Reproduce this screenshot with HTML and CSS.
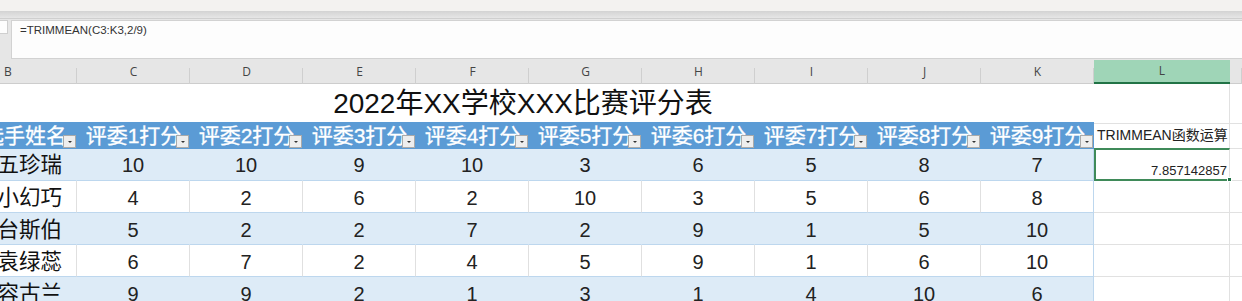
FILE: index.html
```html
<!DOCTYPE html>
<html lang="zh-CN">
<head>
  <meta charset="UTF-8" />
  <meta name="viewport" content="width=device-width, initial-scale=1.0" />
  <title>TRIMMEAN</title>
  <link rel="stylesheet" href="styles.css">
</head>
<body>
  <div class="ribbon"></div>
  <div class="ribbon-edge"></div>

  <div class="formula-row">
    <div class="namebox"></div>
    <div class="fx">=TRIMMEAN(C3:K3,2/9)</div>
  </div>

  <div class="sheet">
    <div class="row colhead">
      <div class="ch left">B</div>
      <div class="ch">C</div>
      <div class="ch">D</div>
      <div class="ch">E</div>
      <div class="ch">F</div>
      <div class="ch">G</div>
      <div class="ch">H</div>
      <div class="ch">I</div>
      <div class="ch">J</div>
      <div class="ch">K</div>
      <div class="ch active">L</div>
      <div class="ch"></div>
    </div>

    <div class="row title-row">
      <div class="title">2022年XX学校XXX比赛评分表</div>
      <div class="cell side"></div>
      <div class="cell"></div>
    </div>

    <div class="row head-row">
      <div class="th name">选手姓名<span class="drop"></span></div>
      <div class="th">评委1打分<span class="drop"></span></div>
      <div class="th">评委2打分<span class="drop"></span></div>
      <div class="th">评委3打分<span class="drop"></span></div>
      <div class="th">评委4打分<span class="drop"></span></div>
      <div class="th">评委5打分<span class="drop"></span></div>
      <div class="th">评委6打分<span class="drop"></span></div>
      <div class="th">评委7打分<span class="drop"></span></div>
      <div class="th">评委8打分<span class="drop"></span></div>
      <div class="th">评委9打分<span class="drop"></span></div>
      <div class="cell side label">TRIMMEAN函数运算</div>
      <div class="cell"></div>
    </div>

    <div class="row data band" id="r1"></div>
    <div class="row data" id="r2"></div>
    <div class="row data band" id="r3"></div>
    <div class="row data" id="r4"></div>
    <div class="row data band" id="r5"></div>
  </div>

  <script>
    // score table
    const rows = [
      ['五珍瑞', 10, 10, 9, 10, 3, 6, 5, 8, 7],
      ['小幻巧', 4, 2, 6, 2, 10, 3, 5, 6, 8],
      ['台斯伯', 5, 2, 2, 7, 2, 9, 1, 5, 10],
      ['袁绿蕊', 6, 7, 2, 4, 5, 9, 1, 6, 10],
      ['容古兰', 9, 9, 2, 1, 3, 1, 4, 10, 6]
    ];

    rows.forEach((r, i) => {
      const row = document.getElementById('r' + (i + 1));
      let html = '<div class="td name">' + r[0] + '</div>';
      for (let j = 1; j < r.length; j++) {
        html += '<div class="td' + (j === 9 ? ' last' : '') + '">' + r[j] + '</div>';
      }
      if (i === 0) {
        html += '<div class="cell side result">7.857142857<span class="handle"></span></div>';
      } else {
        html += '<div class="cell side"></div>';
      }
      html += '<div class="cell"></div>';
      row.innerHTML = html;
    });
  </script>
</body>
</html>
```

FILE: styles.css
```css
* {
  box-sizing: border-box;
}
body {
  margin: 0;
  width: 1242px;
  height: 301px;
  overflow: hidden;
  background: #fff;
  font-family: 'Liberation Sans', 'Noto Sans CJK SC', sans-serif;
  color: #222;
}
.ribbon {
  height: 11px;
  background: #f3f2f0;
}
.ribbon-edge {
  height: 8px;
  background: linear-gradient(to bottom, #d3d3d3, #e6e6e6);
  border-bottom: 1px solid #cfcfcf;
}
.formula-row {
  display: flex;
  height: 41px;
  background: #e6e6e6;
  padding-bottom: 1px;
}
.namebox {
  width: 8px;
  height: 14px;
  margin-top: 1px;
  background: #fdfdfd;
  border: 1px solid #cfcfcf;
  border-left: none;
}
.fx {
  flex: 1;
  margin-left: 3px;
  margin-top: 1px;
  background: #fdfdfd;
  border: 1px solid #d2d2d2;
  border-right: none;
  padding: 3px 0 0 8px;
  font-size: 11.5px;
  color: #333;
}

/* grid */
.row {
  display: grid;
  grid-template-columns: 77px repeat(9, 113px) 136px 1fr;
}
.colhead {
  height: 24px;
  background: #e6e6e6;
  border-bottom: 1px solid #cdcdcd;
}
.ch {
  position: relative;
  text-align: center;
  font-family: 'Open Sans', sans-serif;
  font-size: 12px;
  line-height: 24px;
  color: #444;
}
.ch::after {
  content: '';
  position: absolute;
  right: 0;
  top: 8px;
  bottom: 0;
  width: 1px;
  background: #cfcfcf;
}
.ch.left {
  text-align: left;
  padding-left: 4px;
}
.ch.active {
  background: #9fd5b7;
  border-bottom: 2px solid #217346;
  line-height: 22px;
}
.ch.active::after {
  display: none;
}

.title-row {
  height: 38px;
}
.title {
  grid-column: 1 / 11;
  text-align: center;
  padding-right: 48px;
  font-size: 28px;
  line-height: 40px;
  color: #111;
  white-space: nowrap;
}
.cell {
  border-bottom: 1px solid #e1e1e1;
}
.cell.side {
  border-right: 1px solid #e1e1e1;
}

.head-row {
  height: 26px;
}
.th {
  position: relative;
  background: #5b9bd5;
  color: #fff;
  font-size: 21px;
  line-height: 27px;
  text-align: center;
  white-space: nowrap;
  overflow: hidden;
  -webkit-text-stroke: 0.3px #fff;
}
.th.name {
  direction: rtl;
  text-align: right;
  padding-right: 10px;
}
.drop {
  position: absolute;
  right: 1px;
  bottom: 1px;
  width: 13px;
  height: 13px;
  background: #eeeeee;
  border: 1px solid #aaa;
}
.drop::after {
  content: '';
  position: absolute;
  left: 4px;
  top: 5px;
  border-left: 2px solid transparent;
  border-right: 2px solid transparent;
  border-top: 2px solid #333;
}
.label {
  font-size: 14px;
  line-height: 26px;
  padding-left: 3px;
  white-space: nowrap;
  color: #222;
}

.data {
  height: 32px;
}
#r1 {
  height: 33px;
}
.td {
  font-size: 20px;
  line-height: 34px;
  text-align: center;
  border-bottom: 1px solid #bdd7ee;
  border-right: 1px solid #e0e0e0;
  white-space: nowrap;
  overflow: hidden;
}
.band .td {
  background: #ddebf7;
  border-right-color: #ddebf7;
}
.td.last,
.band .td.last {
  border-right-color: #bdd7ee;
}
.td.name {
  direction: rtl;
  text-align: right;
  padding-right: 14px;
  font-size: 21.5px;
  color: #111;
}
.result {
  position: relative;
  border: 2px solid #3f8a59;
  font-size: 13px;
  text-align: right;
  padding: 13px 2px 0 0;
  color: #222;
}
.handle {
  position: absolute;
  right: -3px;
  bottom: -3px;
  width: 5px;
  height: 5px;
  background: #217346;
  border: 1px solid #fff;
}
```
